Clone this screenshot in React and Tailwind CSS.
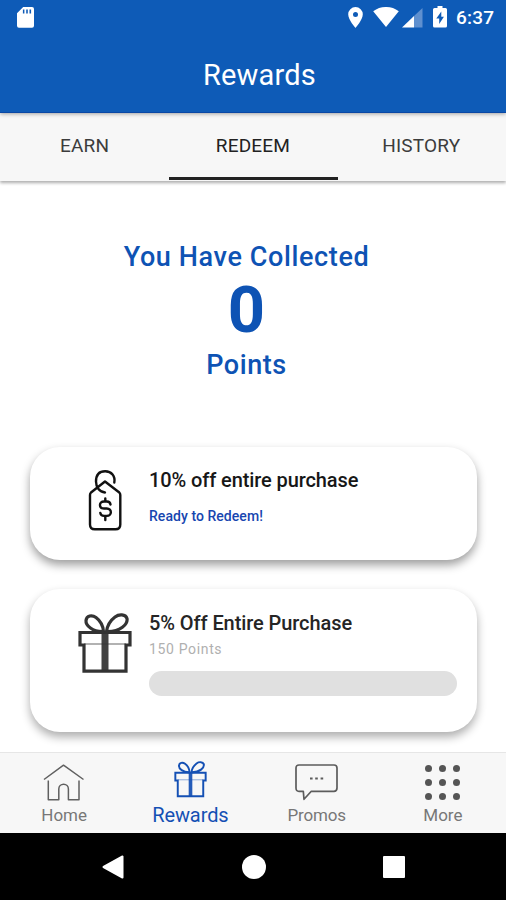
function SdCardIcon() {
  return (
    <svg className="block h-[21px] w-[17px]" viewBox="0 0 17 21">
      <path fill="#fff" fillRule="evenodd" d="M6.2 0H15a2 2 0 0 1 2 2v16.800a2 2 0 0 1-2 2H2a2 2 0 0 1-2-2V6.300zM5.900 2.600v4h1.500v-4zM9.200 2.600v4h1.600v-4zM12.500 2.600v4h1.600v-4z" />
    </svg>
  );
}

function PinIcon() {
  return (
    <svg className="block h-[21px] w-[15px]" viewBox="0 0 15 21">
      <path fill="#fff" fillRule="evenodd" d="M7.500 0A7.300 7.300 0 0 0 .2 7.300C.2 12.800 7.500 21 7.500 21s7.300-8.200 7.300-13.700A7.300 7.300 0 0 0 7.500 0zm0 4.900a2.500 2.500 0 1 1 0 5 2.500 2.500 0 0 1 0-5z" />
    </svg>
  );
}

function WifiIcon() {
  return (
    <svg className="block h-[20px] w-[26px]" viewBox="0 0 26 20">
      <path fill="#fff" d="M13 20L.2 4.200A21 21 0 0 1 13 0a21 21 0 0 1 12.800 4.200z" />
    </svg>
  );
}

function SignalIcon() {
  return (
    <svg className="block h-[20px] w-[21px]" viewBox="0 0 21 20">
      <path fill="#5f90cf" d="M20.500 0v19.500H12V8z" />
      <path fill="#fff" d="M12 8v11.500H0z" />
    </svg>
  );
}

function BatteryIcon() {
  return (
    <svg className="block h-[22px] w-[14px]" viewBox="0 0 14 22">
      <path fill="#fff" fillRule="evenodd" d="M4.500 0h5v2H12.500A1.500 1.500 0 0 1 14 3.500v16.500a1.500 1.500 0 0 1-1.500 1.500h-11A1.500 1.500 0 0 1 0 20V3.500A1.500 1.500 0 0 1 1.500 2h3zM8.300 5.500L3.300 12.600h2.900v5.500l4.700-7.400H8.300z" />
    </svg>
  );
}

function TagIcon() {
  return (
    <svg className="block h-[62px] w-[34px]" viewBox="0 0 34 62" fill="none" stroke="#111" strokeWidth="2.400" strokeLinecap="round" strokeLinejoin="round">
      <path d="M26.300 13.500C27.500 7 23.500 2.200 17.200 2.200S8 6.500 8 12.500 11.500 23 17 23.500" />
      <path d="M17 12.500L31.300 23.500Q32.300 24.500 32.300 26V55.500Q32.300 60.300 27.500 60.300H6.800Q2 60.300 2 55.500V26Q2 24.500 3 23.500z" />
      <path d="M22.500 35.500c-.3-2-1.600-3-3.600-3H16c-5.400 0-5.400 7 0 7h2.800c5.400 0 5.400 7.400 0 7.400H16c-2 0-3.400-1-3.700-3M17.300 29.500v3M17.300 47v4" />
    </svg>
  );
}

function GiftIcon({ className, ribbonWidth }) {
  return (
    <svg className={className} viewBox="0 0 54 61" fill="none" stroke="currentColor" strokeWidth="3.200">
      <path d="M2 19.500H52V32H48V58.200H6V32H2z" />
      <path d="M6 31H48" strokeWidth="1.500" opacity="0.500" />
      <path d="M27 18.500V59" strokeWidth={ribbonWidth} opacity="0.930" />
      <path d="M25.500 18.500C14.500 19 7.500 12.500 8 7.500 8.500 2.500 14 1.500 18 4.500c4 3 7 7.500 7.500 14z" />
      <path d="M28.500 18.500c1-7 4.500-11.500 8.500-14.500 4-3 10.500-3 12 1.500 1 5.500-6.500 13.500-20.500 13z" />
    </svg>
  );
}

function HomeIcon() {
  return (
    <svg className="block h-[38px] w-[42px]" viewBox="0 0 42 38" fill="none" stroke="#606060" strokeWidth="1.500" strokeLinejoin="round">
      <path d="M1 15.500L20.500 1.200 40.500 15.500" />
      <path d="M5.300 16.500v19.300H15.800V25a4.800 4.800 0 0 1 9.600 0V35.800H36V16.500" />
    </svg>
  );
}

function PromoIcon() {
  return (
    <svg className="block h-[38px] w-[43px]" viewBox="0 0 43 38" fill="none" stroke="#5c5c5c" strokeWidth="1.700" strokeLinejoin="round">
      <path d="M4 1H39Q42 1 42 4V24Q42 27.300 39 27.300H16.300L9 35.300 8.300 27.300H4Q1 27.300 1 24V4Q1 1 4 1z" />
      <path fill="#5c5c5c" stroke="none" d="M15 13.500h2.600v2H15zM20.200 13.500h2.600v2h-2.600zM25.600 13.500h2.600v2h-2.600z" />
    </svg>
  );
}

function Tab({ label, active }) {
  return (
    <div className={active ? "h-[67px] flex-1 border-b-[3px] border-[#222] pt-[22px] text-center text-[#222]" : "h-[67px] flex-1 pt-[22px] text-center text-[#3c3c3c]"}>
      <span className="block pr-px text-[19px] leading-[22px] tracking-[0.2px]">{label}</span>
    </div>
  );
}

export default function App() {
  return (
    <div className="flex h-[900px] w-[506px] flex-col overflow-hidden bg-white font-['Roboto',sans-serif]">
      <header className="relative z-10 h-[113px] shrink-0 border-b border-[#0a48a5] bg-[#0e5bb7] text-white shadow-[0_1px_4px_rgba(0,0,0,0.35)]">
        <div className="flex h-[36px] items-start pt-[7px] pl-[17px]">
          <SdCardIcon />
          <div className="ml-auto flex items-start pr-[11px]">
            <PinIcon />
            <div className="ml-[10px]"><WifiIcon /></div>
            <div className="mt-px ml-[3px]"><SignalIcon /></div>
            <div className="-mt-px ml-[10px]"><BatteryIcon /></div>
            <span className="ml-[9px] w-[39px] text-[19px] leading-[22px] font-medium tracking-[0.2px] whitespace-nowrap">6:37</span>
          </div>
        </div>
        <h1 className="mt-[22px] pl-[13px] text-center text-[29px] leading-[34px] tracking-[0.2px]">Rewards</h1>
      </header>

      <nav className="flex h-[68px] shrink-0 bg-[#f7f7f7] pl-px shadow-[0_2px_3px_rgba(0,0,0,0.32)]">
        <Tab label="EARN" />
        <Tab label="REDEEM" active />
        <Tab label="HISTORY" />
      </nav>

      <main className="flex min-h-0 flex-1 flex-col overflow-hidden">
        <section className="flex h-[266px] shrink-0 flex-col pt-[60px] pr-[13px] text-center font-medium text-[#0e53b4]">
          <p className="text-[27px] leading-[32px] tracking-[0.62px]">You Have Collected</p>
          <p className="mt-[-1px] text-[65px] leading-[76px] font-bold">0</p>
          <p className="mt-[1px] text-[27px] leading-[32px] tracking-[0.55px]">Points</p>
        </section>

        <section className="ml-[30px] flex h-[113px] w-[447px] shrink-0 rounded-[30px] bg-white pl-[58px] shadow-[0_5px_10px_rgba(0,0,0,0.38)]">
          <div className="w-[61px] shrink-0 pt-[22px]"><TagIcon /></div>
          <div className="pt-[21px] whitespace-nowrap">
            <h2 className="text-[20px] leading-[24px] font-medium tracking-[-0.1px] text-[#171717]">10% off entire purchase</h2>
            <p className="mt-[15px] text-[14px] leading-[18px] font-medium tracking-[0.05px] text-[#1746b0]">Ready to Redeem!</p>
          </div>
        </section>

        <section className="mt-[29px] ml-[30px] flex h-[143px] w-[447px] shrink-0 rounded-[30px] bg-white pl-[48px] shadow-[0_5px_10px_rgba(0,0,0,0.32)]">
          <div className="w-[71px] shrink-0 pt-[24px] text-[#333]"><GiftIcon className="block h-[61px] w-[54px]" ribbonWidth="7" /></div>
          <div className="pt-[22px] whitespace-nowrap">
            <h2 className="text-[20px] leading-[24px] font-medium tracking-[-0.08px] text-[#252525]">5% Off Entire Purchase</h2>
            <p className="mt-[5px] text-[14px] leading-[18px] tracking-[0.65px] text-[#b0b0b0]">150 Points</p>
            <div className="mt-[13px] h-[25px] w-[308px] rounded-full bg-[#e0e0e0]" />
          </div>
        </section>
      </main>

      <nav className="flex h-[81px] shrink-0 border-t border-[#e6e6e6] bg-[#f7f7f7] pl-px text-[17px] leading-[20px] text-[#777]">
        <div className="flex flex-1 flex-col items-center pt-[11px]">
          <HomeIcon />
          <span className="mt-[3px]">Home</span>
        </div>
        <div className="flex flex-1 flex-col items-center pt-[8px] text-[#1450b4]">
          <GiftIcon className="block h-[37px] w-[33px]" ribbonWidth="6" />
          <span className="mt-[5px] text-[20px] leading-[24px] tracking-[-0.1px]">Rewards</span>
        </div>
        <div className="flex flex-1 flex-col items-center pt-[11px]">
          <PromoIcon />
          <span className="mt-[3px] tracking-[-0.15px]">Promos</span>
        </div>
        <div className="flex flex-1 flex-col items-center pt-[12px]">
          <div className="grid grid-cols-3 gap-[7px]">
            {Array.from({ length: 9 }, (_, i) => (
              <i key={i} className="block size-[7px] rounded-full bg-[#555]" />
            ))}
          </div>
          <span className="mt-[5px]">More</span>
        </div>
      </nav>

      <footer className="flex h-[67px] shrink-0 items-center bg-black pl-[102px]">
        <svg className="block h-[24px] w-[22px]" viewBox="0 0 22 24">
          <path fill="#fff" stroke="#fff" strokeWidth="2" strokeLinejoin="round" d="M20.500 1.500v21L1.500 12z" />
        </svg>
        <div className="ml-[118px] size-[24px] rounded-full bg-white" />
        <div className="ml-[117px] size-[22px] rounded-[1px] bg-white" />
      </footer>
    </div>
  );
}
